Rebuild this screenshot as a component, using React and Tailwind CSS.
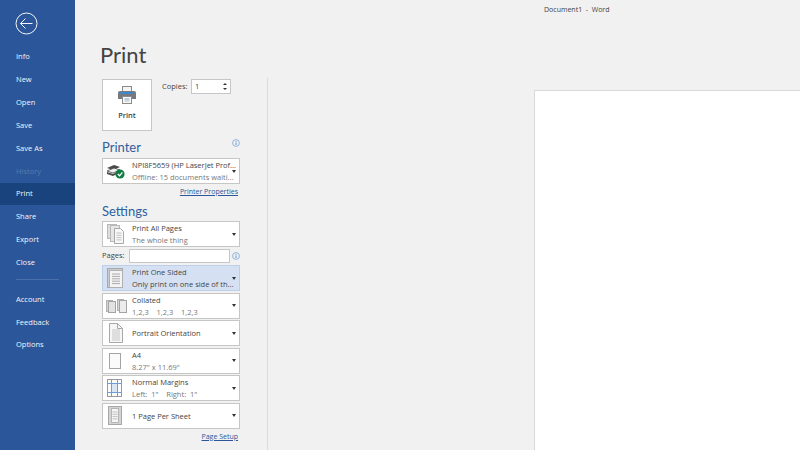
const font = { fontFamily: '"Open Sans", "Noto Sans", sans-serif' };
const headingFont = { fontFamily: 'Lato, "Open Sans", sans-serif' };

const navTop = ["Info", "New", "Open", "Save", "Save As", "History", "Print", "Share", "Export", "Close"];
const navBottom = ["Account", "Feedback", "Options"];

const NavItem = ({ label }) => (
  <div
    className={`h-[22.85px] flex items-center pl-[16px] text-[7.5px] ${
      label === "Print" ? "bg-[#19437c] text-[#f2f5fa]" : label === "History" ? "text-[#5579ae]" : "text-[#f2f5fa]"
    }`}
  >
    {label}
  </div>
);

const icons = {
  printer: (
    <svg width="20" height="18" viewBox="0 0 20 18">
      <rect x="5.5" y="0.5" width="9" height="6" fill="#f4f4f4" stroke="#8a8a8a" />
      <path d="M1 6.5Q1 5 3 5h14q2 0 2 1.5V13H1z" fill="#77797c" />
      <rect x="3" y="6" width="14" height="2" fill="#3f87c9" />
      <rect x="5.5" y="10.5" width="9" height="7" fill="#fafafa" stroke="#8a8a8a" />
      <line x1="7.5" x2="12.5" y1="13" y2="13" stroke="#6fa3d6" />
      <line x1="7.5" x2="12.5" y1="15" y2="15" stroke="#b5b5b5" />
    </svg>
  ),
  device: (
    <svg width="20" height="16" viewBox="0 0 20 16">
      <path d="M1 5l7-3 6 2-7 3z" fill="#4a4a4a" />
      <path d="M1 8l7-3 6 2-7 3z" fill="#f2f2f2" stroke="#4a4a4a" strokeWidth="0.8" />
      <path d="M1 11l6 2 4-2v-2l-4 2-6-2z" fill="#4a4a4a" />
      <circle cx="14" cy="11" r="4.6" fill="#107c41" />
      <path d="M11.8 11l1.8 1.8 2.8-3.4" fill="none" stroke="#fff" strokeWidth="1.3" />
    </svg>
  ),
  pages: (
    <svg width="22" height="22" viewBox="0 0 22 22">
      <rect x="1.5" y="1.5" width="9" height="14" fill="#dedede" stroke="#b9b9b9" />
      <rect x="4.5" y="2.5" width="9" height="16" fill="#e6e6e6" stroke="#b9b9b9" />
      <path d="M8.5 5.5h6l3 3v12h-9z" fill="#f8f8f8" stroke="#a8a8a8" />
      {[0, 1, 2, 3].map((i) => (
        <line key={i} x1="10.5" x2="15.5" y1={10 + i * 2.3} y2={10 + i * 2.3} stroke="#c2c2c2" />
      ))}
    </svg>
  ),
  sided: (
    <svg width="22" height="22" viewBox="0 0 22 22">
      <rect x="1.5" y="1.5" width="15" height="19" fill="#c9ccd0" stroke="#a8a8a8" />
      <rect x="3.5" y="3.5" width="13" height="17" fill="#f4f4f4" stroke="#b0b0b0" />
      {[0, 1, 2, 3, 4].map((i) => (
        <line key={i} x1="6" x2="14" y1={7 + i * 2.4} y2={7 + i * 2.4} stroke="#a8a8a8" />
      ))}
    </svg>
  ),
  collated: (
    <svg width="22" height="16" viewBox="0 0 22 16">
      <rect x="0.5" y="2.5" width="6" height="11" fill="#d4d4d4" stroke="#b0b0b0" />
      <rect x="2.5" y="3.5" width="7" height="11" fill="#e2e2e2" stroke="#a4a4a4" />
      <rect x="11.5" y="1.5" width="6" height="11" fill="#d4d4d4" stroke="#b0b0b0" />
      <rect x="13.5" y="2.5" width="7" height="12" fill="#ececec" stroke="#a4a4a4" />
    </svg>
  ),
  portrait: (
    <svg width="22" height="22" viewBox="0 0 22 22">
      <path d="M3.5 1.5h8l5 5v14h-13z" fill="#f6f6f6" stroke="#a8a8a8" />
      <path d="M11.5 1.5v5h5" fill="none" stroke="#a8a8a8" />
      {[0, 1, 2, 3, 4, 5].map((i) => (
        <line key={i} x1="6" x2="14" y1={8 + i * 2} y2={8 + i * 2} stroke="#c6c6c6" />
      ))}
    </svg>
  ),
  a4: (
    <svg width="22" height="20" viewBox="0 0 22 20">
      <rect x="3.5" y="2.5" width="11" height="15" fill="#fafafa" stroke="#a4a4a4" />
    </svg>
  ),
  margins: (
    <svg width="22" height="22" viewBox="0 0 22 22">
      <rect x="1.5" y="2.5" width="14" height="17" fill="#fafafa" stroke="#9a9a9a" />
      <rect x="5" y="6" width="7" height="10" fill="#dbe6f4" />
      <line x1="1" x2="16" y1="6.5" y2="6.5" stroke="#6f9dd4" />
      <line x1="1" x2="16" y1="15.5" y2="15.5" stroke="#6f9dd4" />
      <line x1="5.5" x2="5.5" y1="2" y2="20" stroke="#6f9dd4" />
      <line x1="11.5" x2="11.5" y1="2" y2="20" stroke="#6f9dd4" />
    </svg>
  ),
  sheet: (
    <svg width="22" height="22" viewBox="0 0 22 22">
      <rect x="2.5" y="1.5" width="13" height="18" fill="#d4d4d4" stroke="#a8a8a8" />
      <rect x="5.5" y="3.5" width="7" height="14" fill="#f6f6f6" stroke="#b5b5b5" />
      {[0, 1, 2, 3].map((i) => (
        <line key={i} x1="6.5" x2="11.5" y1={7 + i * 2.3} y2={7 + i * 2.3} stroke="#c0c0c0" />
      ))}
    </svg>
  ),
};

const InfoIcon = () => (
  <svg width="8" height="8" viewBox="0 0 8 8" className="shrink-0">
    <circle cx="4" cy="4" r="3.4" fill="none" stroke="#7ba3d8" strokeWidth="0.8" />
    <rect x="3.6" y="3.4" width="0.9" height="2.6" fill="#5b8ccb" />
    <rect x="3.6" y="1.9" width="0.9" height="0.9" fill="#5b8ccb" />
  </svg>
);

const Dropdown = ({ icon, title, sub, active }) => (
  <div
    className={`h-[26px] w-[138px] flex items-center shrink-0 border ${
      active ? "bg-[#d5e1f2] border-[#bcd0ea]" : "bg-white border-[#c6c6c6]"
    }`}
  >
    <div className="w-[29px] pl-[3px] shrink-0 flex items-center">{icons[icon]}</div>
    <div className="flex-1 min-w-0 text-[7.5px] leading-[12px] whitespace-pre text-[#444]">
      <div>{title}</div>
      {sub && <div className={active ? "text-[#444]" : "text-[#777]"}>{sub}</div>}
    </div>
    <div className="w-0 h-0 mr-[3px] border-x-[2.5px] border-x-transparent border-t-[3px] border-t-[#333]" />
  </div>
);

const App = () => {
  return (
    <div className="w-[800px] h-[450px] flex overflow-hidden bg-[#f1f1f1]" style={font}>
      <aside className="w-[75px] h-full bg-[#2b579a] shrink-0">
        <div className="h-[45.5px] pl-[15px] pt-[12px]">
          <svg width="23" height="23" viewBox="0 0 23 23">
            <circle cx="11.5" cy="11.5" r="10.5" fill="none" stroke="#f2f5fa" strokeWidth="1" />
            <path d="M5.5 11.5h12M10.5 6.5l-5 5 5 5" fill="none" stroke="#f2f5fa" strokeWidth="1" />
          </svg>
        </div>
        {navTop.map((label) => (
          <NavItem key={label} label={label} />
        ))}
        <div className="mx-[16px] my-[5.5px] h-px bg-[#4a70aa]" />
        <div className="pt-[2px]">
          {navBottom.map((label) => (
            <NavItem key={label} label={label} />
          ))}
        </div>
      </aside>

      <div className="w-[193px] shrink-0 h-full flex flex-col">
        <h1 className="h-[78px] pl-[25px] pt-[38px] text-[22px] leading-[34px] text-[#444]" style={headingFont}>
          Print
        </h1>
        <div className="flex-1 border-r border-[#dcdcdc] pl-[27px]">
          <div className="flex items-start pt-px">
            <div className="w-[50px] h-[52px] bg-white border border-[#c6c6c6] flex flex-col items-center pt-[6px]">
              {icons.printer}
              <span className="text-[7.5px] font-semibold text-[#444] mt-[6px]">Print</span>
            </div>
            <span className="w-[29px] ml-[10px] mt-[2px] text-[7.5px] text-[#444]">Copies:</span>
            <div className="w-[40px] h-[15px] bg-white border border-[#c6c6c6] flex items-center justify-between px-[3px] text-[7.5px] text-[#444]">
              <span>1</span>
              <div className="flex flex-col gap-[3px]">
                <div className="w-0 h-0 border-x-2 border-x-transparent border-b-2 border-b-[#333]" />
                <div className="w-0 h-0 border-x-2 border-x-transparent border-t-2 border-t-[#333]" />
              </div>
            </div>
          </div>

          <div className="w-[138px] h-[27px] flex items-end justify-between">
            <h2 className="mb-[1px] text-[13px] leading-[19px] text-[#2f5f9f]" style={headingFont}>
              Printer
            </h2>
            <div className="mb-[11px]">
              <InfoIcon />
            </div>
          </div>
          <Dropdown icon="device" title="NPI8F5659 (HP LaserJet Prof..." sub="Offline: 15 documents waiti..." />
          <div className="w-[136px] mt-px text-right text-[7px] leading-[14px] text-[#2b579a] underline">Printer Properties</div>

          <h2 className="mt-[3px] h-[18px] text-[13px] leading-[19px] text-[#2f5f9f]" style={headingFont}>
            Settings
          </h2>
          <div className="flex flex-col gap-[1.5px] mt-[1px]">
            <Dropdown icon="pages" title="Print All Pages" sub="The whole thing" />
            <div className="flex items-center h-[15px] w-[138px]">
              <span className="w-[27px] text-[7.5px] text-[#444]">Pages:</span>
              <div className="w-[102px] h-[14px] bg-white border border-[#c6c6c6]" />
              <div className="ml-[2px]">
                <InfoIcon />
              </div>
            </div>
            <Dropdown icon="sided" title="Print One Sided" sub="Only print on one side of th..." active />
            <Dropdown icon="collated" title="Collated" sub={"1,2,3    1,2,3    1,2,3"} />
            <Dropdown icon="portrait" title="Portrait Orientation" />
            <Dropdown icon="a4" title="A4" sub={"8.27\" x 11.69\""} />
            <Dropdown icon="margins" title="Normal Margins" sub={"Left:  1\"    Right:  1\""} />
            <Dropdown icon="sheet" title="1 Page Per Sheet" />
          </div>
          <div className="w-[136px] mt-[1px] text-right text-[7px] leading-[14px] text-[#2b579a] underline">Page Setup</div>
        </div>
      </div>

      <div className="flex-1 h-full flex flex-col">
        <div className="h-[90px] pl-[276px] pt-[4px] text-[7px] leading-[12px] text-[#444] whitespace-pre">
          Document1  -  Word
        </div>
        <div className="flex-1 ml-[266px] bg-white border-t border-l border-[#d9d9d9]" />
      </div>
    </div>
  );
};

export default App;
